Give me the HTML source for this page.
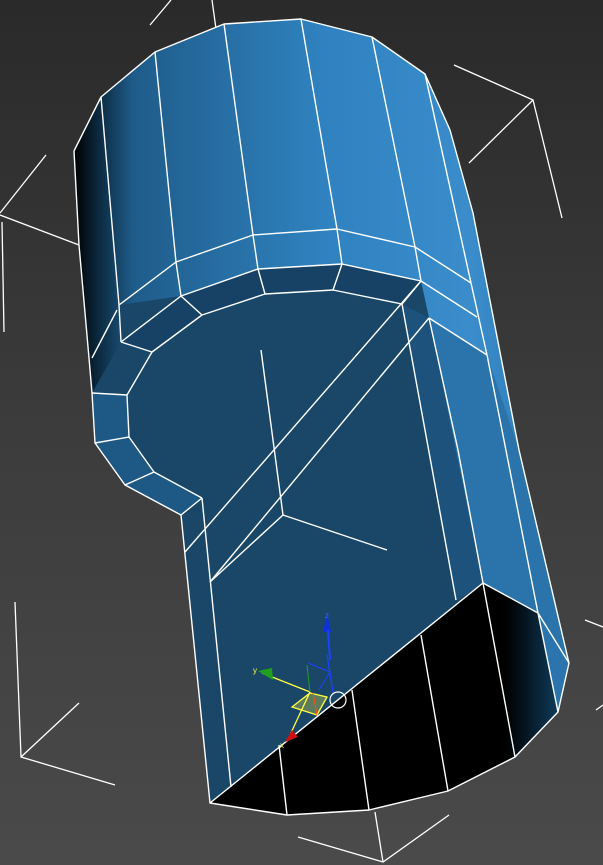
<!DOCTYPE html>
<html><head><style>html,body{margin:0;padding:0;width:603px;height:865px;overflow:hidden;background:#3c3c3c}</style></head>
<body>
<svg width="603" height="865" viewBox="0 0 603 865" xmlns="http://www.w3.org/2000/svg">
<defs>
<linearGradient id="bg" x1="0" y1="0" x2="0" y2="1"><stop offset="0" stop-color="#2a2a2a"/><stop offset="0.5" stop-color="#3c3c3c"/><stop offset="1" stop-color="#4a4a4a"/></linearGradient>
<linearGradient id="body" x1="0" y1="0" x2="1" y2="0"><stop offset="0" stop-color="#000"/><stop offset="0.05" stop-color="#0c2a40"/><stop offset="0.12" stop-color="#1f5c8a"/><stop offset="0.5" stop-color="#2f82bf"/><stop offset="0.8" stop-color="#3a8ccb"/><stop offset="1" stop-color="#2d78b2"/></linearGradient>
<linearGradient id="cap" x1="0" y1="0" x2="1" y2="0"><stop offset="0" stop-color="#000"/><stop offset="0.85" stop-color="#000"/><stop offset="1" stop-color="#0f3a5a"/></linearGradient>
</defs>
<rect width="603" height="865" fill="url(#bg)"/>
<g stroke="#fff" stroke-width="1.3" fill="none">
<polyline points="150,25 171,0"/><polyline points="212,0 222,72"/>
<polyline points="454,65 533,100 562,218"/><polyline points="533,100 469,163"/>
<polyline points="46,155 0,213"/><polyline points="0,215 79,245"/><polyline points="2,222 4,332"/>
<polyline points="15,602 21,757 115,785"/><polyline points="21,757 79,703"/>
<polyline points="298,837 383,862 449,815"/><polyline points="375,812 383,862"/>
<polyline points="585,620 603,627"/><polyline points="596,710 603,705"/>
</g>
<polygon fill="url(#body)" points="74,151 101,97 155,52 224,24 301,19 372,37 425,74 450,130 473,213 519,450 569,663 558,712 515,757 448,791 369,810 287,815 210,803 181,515 125,485 95,443 92,393 89,358 79,245"/>
<polygon fill="#1a4768" points="119,305 181,296 258,269 342,264 421,281 429,318 456,600 483,583 210,803 181,515 125,485 95,443 92,393 121,342"/>
<polygon fill="#1c527c" points="402,304 429,318 458,450 483,583 456,600"/>
<polygon fill="#2a73ab" points="429,318 487,355 519,450 569,663 538,613 483,583"/>
<polygon fill="#1e5885" points="92,393 127,395 129,437 154,472 202,498 181,515 125,485 95,443"/>
<polygon fill="#174266" points="152,352 202,315 265,294 333,290 402,304 421,281 342,264 258,269 181,296 121,342"/>
<polygon fill="url(#cap)" points="210,803 483,583 538,613 558,712 515,757 448,791 369,810 287,815"/>
<polygon fill="#2b74ad" points="538,613 569,663 558,712"/>
<g stroke="#fff" stroke-width="1.4" fill="none" stroke-linejoin="round">
<polyline points="74,151 101,97 155,52 224,24 301,19 372,37 425,74 450,130 473,213 519,450 569,663 558,712 515,757 448,791 369,810 287,815 210,803 181,515 125,485 95,443 92,393 89,358 79,245 74,151"/>
<polyline points="117,310 92,358"/>
<polyline points="101,97 119,305 121,342"/>
<polyline points="155,52 176,262 181,296"/>
<polyline points="224,24 253,235 258,269"/>
<polyline points="301,19 337,229 342,264"/>
<polyline points="372,37 415,247 421,281"/>
<polyline points="425,74 471,283 487,355 500,420 538,613"/>
<polyline points="119,305 176,262 253,235 337,229 415,247 471,283"/>
<polyline points="121,342 181,296 258,269 342,264 421,281 477,317"/>
<polyline points="429,318 487,355"/>
<polyline points="121,342 152,352 202,315 265,294 333,290 402,304"/>
<polyline points="181,296 202,315"/><polyline points="258,269 265,294"/><polyline points="342,264 333,290"/><polyline points="421,281 402,304"/>
<polyline points="152,352 127,395 129,437 154,472 202,498"/>
<polyline points="92,393 127,395"/><polyline points="95,443 129,437"/><polyline points="125,485 154,472"/><polyline points="181,515 202,498"/>
<polyline points="421,281 185,552"/>
<polyline points="429,318 210,582"/>
<polyline points="402,304 456,600"/>
<polyline points="429,318 458,450 483,583"/>
<polyline points="261,350 283,515 387,550"/><polyline points="283,515 210,582"/>
<polyline points="202,498 231,787"/>
<polyline points="210,803 483,583 538,613 569,663"/>
<polyline points="279,745 287,815"/><polyline points="352,690 369,810"/><polyline points="421,635 448,791"/><polyline points="483,583 515,757"/><polyline points="538,613 558,712"/>
</g>
<polygon points="292,707 310,693 327,697 317,715" fill="#6f8a5a" fill-opacity="0.8" stroke="#ffff40" stroke-width="1.3"/>
<line x1="262" y1="673" x2="310" y2="692" stroke="#ffff40" stroke-width="1.3"/>
<polygon points="258,671 272,668 273,680" fill="#1ea01e"/>
<line x1="310" y1="692" x2="290" y2="735" stroke="#ffff40" stroke-width="1.3"/>
<polygon points="285,742 292,730 298,737" fill="#d01010"/>
<line x1="327" y1="655" x2="333" y2="692" stroke="#2040ff" stroke-width="1.3"/>
<polygon points="327,614 323,632 331,632" fill="#1030e0"/>
<line x1="328" y1="630" x2="330" y2="660" stroke="#2040ff" stroke-width="2"/>
<polyline points="308,663 330,672 319,690" stroke="#2040ff" stroke-width="1" fill="none"/>
<line x1="307" y1="665" x2="310" y2="692" stroke="#20a020" stroke-width="1"/>
<line x1="313" y1="693" x2="317" y2="715" stroke="#ff5010" stroke-width="1"/>
<circle cx="338" cy="700" r="8" stroke="#fff" stroke-width="1.2" fill="none"/>
<text x="253" y="673" font-family="Liberation Sans, sans-serif" font-size="8" fill="#ffff40">y</text>
<text x="325" y="618" font-family="Liberation Sans, sans-serif" font-size="8" fill="#4060ff">z</text>
<text x="280" y="748" font-family="Liberation Sans, sans-serif" font-size="8" fill="#ffff40">x</text>
</svg>
</body></html>
